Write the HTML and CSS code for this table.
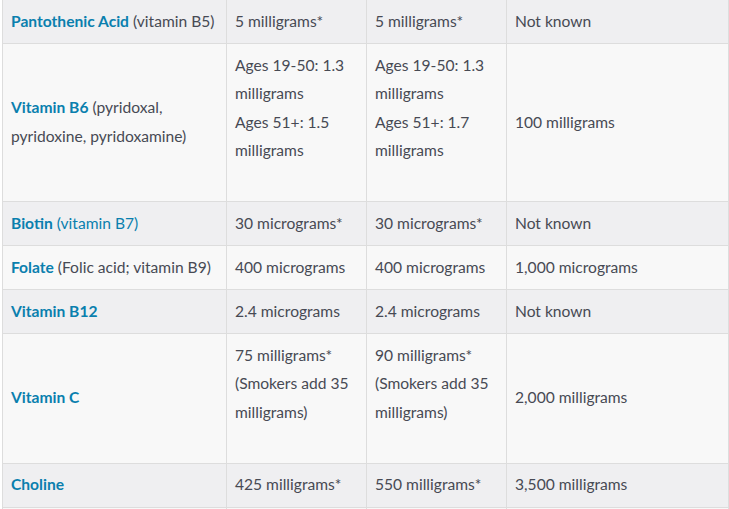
FILE: index.html
```html
<!DOCTYPE html>
<html lang="en">
<head>
<meta charset="utf-8">
<title>Vitamins</title>
<link rel="stylesheet" href="styles.css">
</head>
<body>
<table class="nutri">
  <colgroup>
    <col class="c1"><col class="c2"><col class="c3"><col class="c4">
  </colgroup>
  <tbody>
    <tr>
      <td><a class="name">Pantothenic Acid</a> (vitamin B5)</td>
      <td>5 milligrams*</td>
      <td>5 milligrams*</td>
      <td>Not known</td>
    </tr>
    <tr>
      <td><a class="name">Vitamin B6</a> (pyridoxal, pyridoxine, pyridoxamine)</td>
      <td><div class="multi">Ages 19-50: 1.3 milligrams<br>Ages 51+: 1.5 milligrams</div></td>
      <td><div class="multi">Ages 19-50: 1.3 milligrams<br>Ages 51+: 1.7 milligrams</div></td>
      <td>100 milligrams</td>
    </tr>
    <tr>
      <td><a class="name">Biotin</a> <span class="link">(vitamin B7)</span></td>
      <td>30 micrograms*</td>
      <td>30 micrograms*</td>
      <td>Not known</td>
    </tr>
    <tr>
      <td><a class="name">Folate</a> (Folic acid; vitamin B9)</td>
      <td>400 micrograms</td>
      <td>400 micrograms</td>
      <td>1,000 micrograms</td>
    </tr>
    <tr>
      <td><a class="name">Vitamin B12</a></td>
      <td>2.4 micrograms</td>
      <td>2.4 micrograms</td>
      <td>Not known</td>
    </tr>
    <tr>
      <td><a class="name">Vitamin C</a></td>
      <td><div class="multi">75 milligrams* (Smokers add 35 milligrams)</div></td>
      <td><div class="multi">90 milligrams* (Smokers add 35 milligrams)</div></td>
      <td>2,000 milligrams</td>
    </tr>
    <tr>
      <td><a class="name">Choline</a></td>
      <td>425 milligrams*</td>
      <td>550 milligrams*</td>
      <td>3,500 milligrams</td>
    </tr>
    <tr>
      <td><a class="name">Chromium</a></td>
      <td>25 micrograms*</td>
      <td>35 micrograms*</td>
      <td>Not known</td>
    </tr>
  </tbody>
</table>
</body>
</html>
```

FILE: styles.css
```css
html, body {
  margin: 0;
  padding: 0;
  background: #ffffff;
}

.nutri {
  margin: -1px 0 0 2px;
  border-collapse: collapse;
  table-layout: fixed;
  width: 726px;
  font-family: Lato, "Noto Sans", sans-serif;
  font-size: 15.6px;
  line-height: 28.5px;
  color: #474a54;
}

.c1 { width: 224px; }
.c2 { width: 140px; }
.c3 { width: 140px; }
.c4 { width: 222px; }

.nutri td {
  border: 1px solid #dddddd;
  padding: 6.5px 8px 8px 8px;
  vertical-align: middle;
  text-align: left;
}

.nutri tr:nth-child(odd) td { background: #efeff1; }
.nutri tr:nth-child(even) td { background: #f8f8f8; }

.name {
  color: #0a7fae;
  font-weight: 700;
  text-decoration: none;
}

.link {
  color: #0a7fae;
}

.multi {
  padding-bottom: 28.5px;
}
```
